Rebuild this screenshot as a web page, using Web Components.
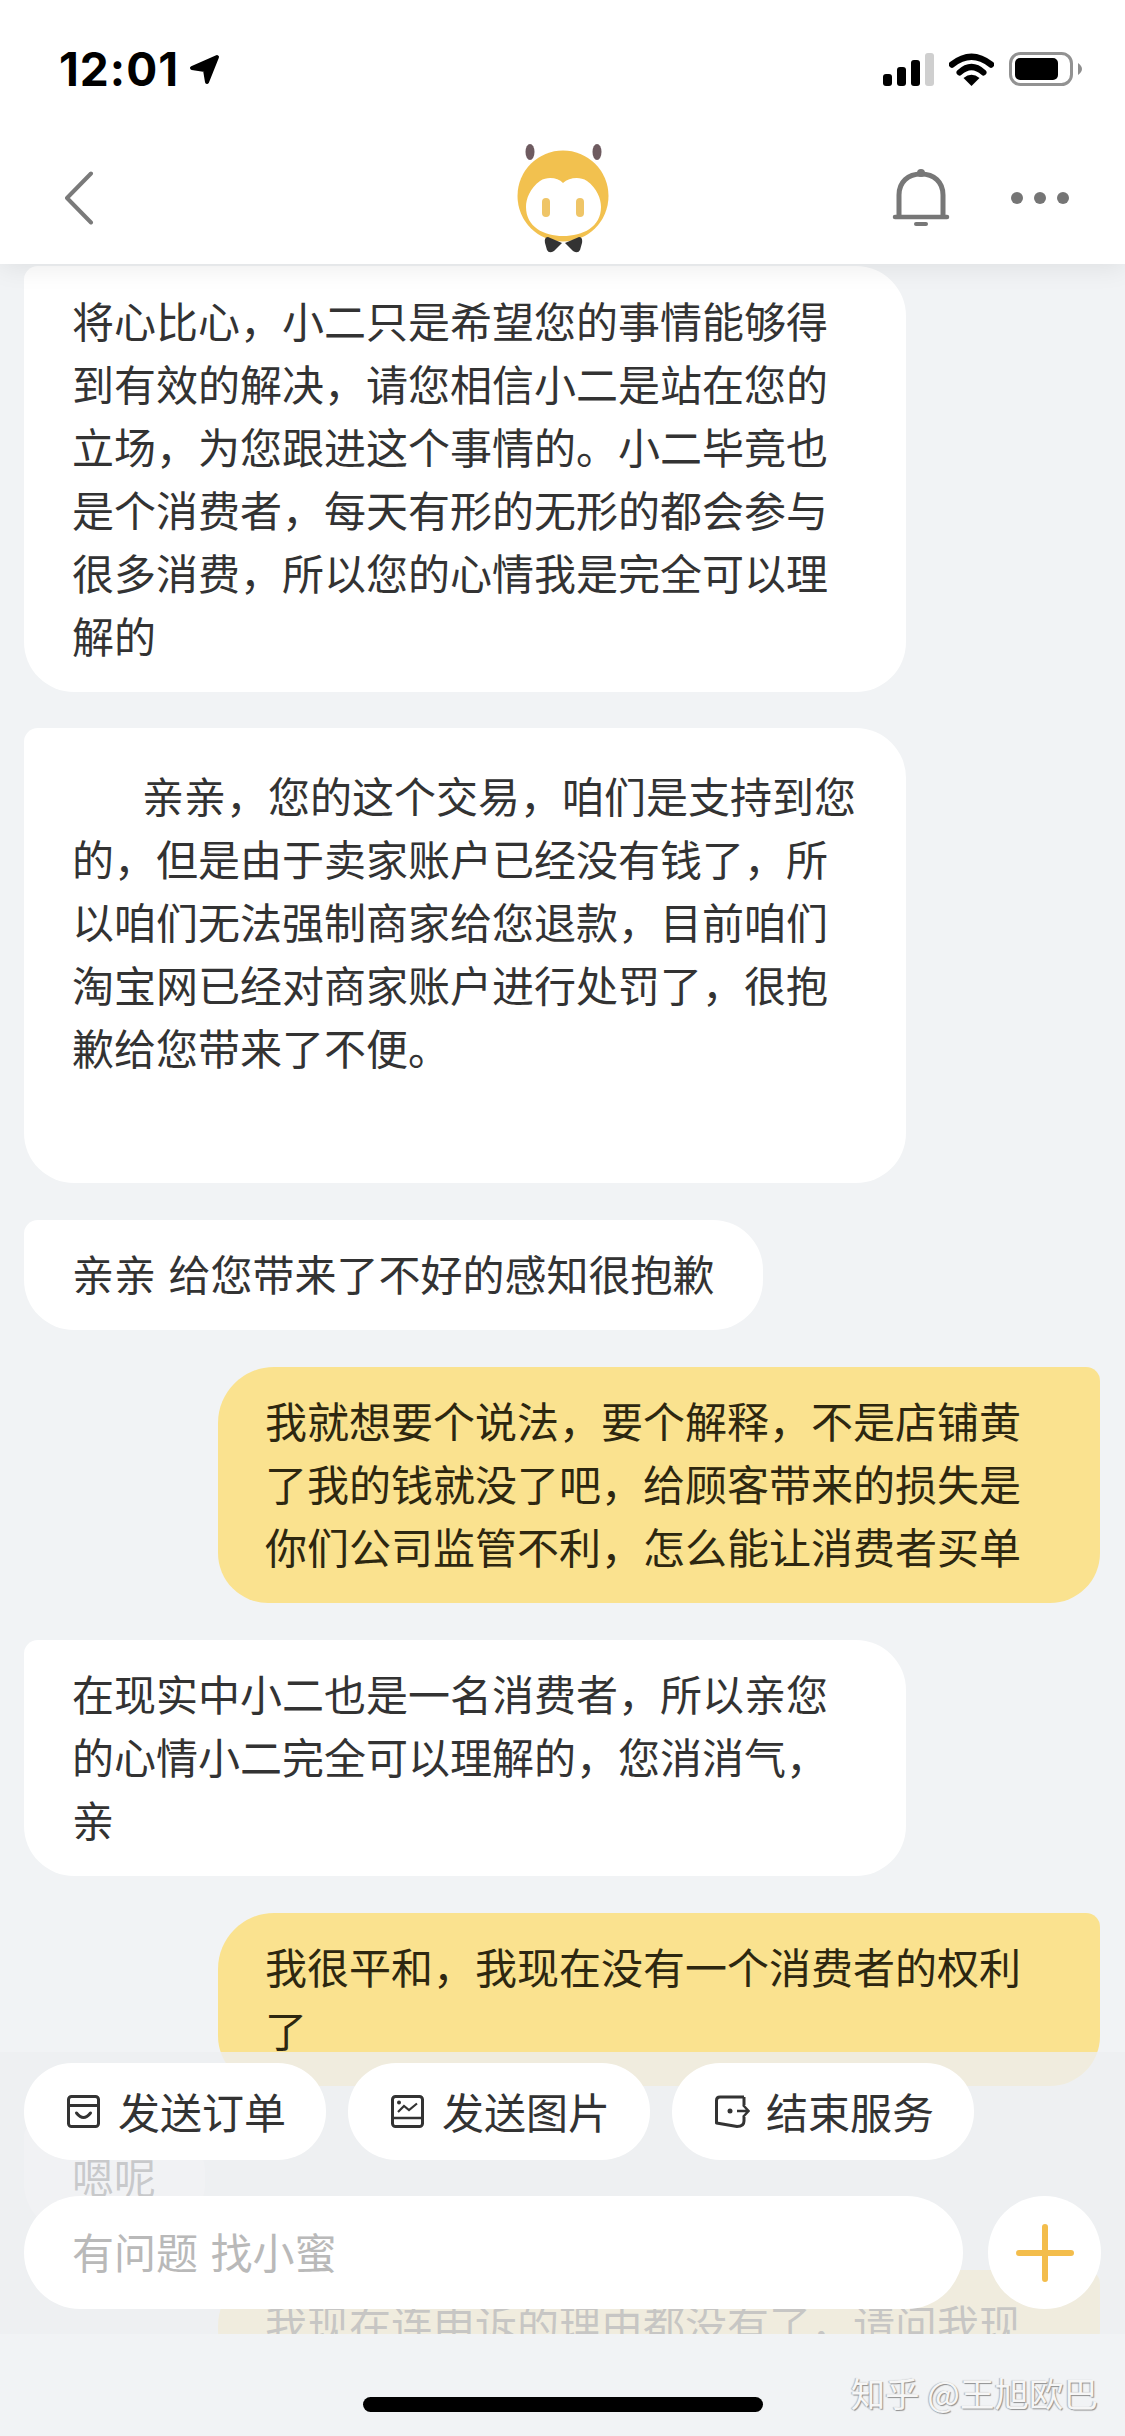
<!DOCTYPE html>
<html lang="zh-CN">
<head>
<meta charset="UTF-8">
<title>小蜜</title>
<style>
    html, body { margin: 0; padding: 0; background: #f1f3f5; }
    body { font-family: "Noto Sans CJK SC", "Noto Sans", sans-serif; }
</style>
</head>
<body>
<app-screen>
    <app-header slot="header"></app-header>

    <chat-bubble>将心比心，小二只是希望您的事情能够得到有效的解决，请您相信小二是站在您的立场，为您跟进这个事情的。小二毕竟也是个消费者，每天有形的无形的都会参与很多消费，所以您的心情我是完全可以理解的</chat-bubble>
    <chat-bubble style="--indent:70px;--pad-top:34.5px;--pad-bottom:105.5px">亲亲，您的这个交易，咱们是支持到您的，但是由于卖家账户已经没有钱了，所以咱们无法强制商家给您退款，目前咱们淘宝网已经对商家账户进行处罚了，很抱歉给您带来了不便。</chat-bubble>
    <chat-bubble>亲亲 给您带来了不好的感知很抱歉</chat-bubble>
    <chat-bubble side="me">我就想要个说法，要个解释，不是店铺黄了我的钱就没了吧，给顾客带来的损失是你们公司监管不利，怎么能让消费者买单</chat-bubble>
    <chat-bubble>在现实中小二也是一名消费者，所以亲您的心情小二完全可以理解的，您消消气，亲</chat-bubble>
    <chat-bubble side="me">我很平和，我现在没有一个消费者的权利了</chat-bubble>
    <chat-bubble>嗯呢</chat-bubble>
    <chat-bubble side="me">我现在连申诉的理由都没有了，请问我现</chat-bubble>

    <chat-composer slot="footer">
        <action-chip slot="chips" icon="order">发送订单</action-chip>
        <action-chip slot="chips" icon="image">发送图片</action-chip>
        <action-chip slot="chips" icon="exit">结束服务</action-chip>
    </chat-composer>
</app-screen>

<script>
    // Whole phone screen: header on top, scrolled chat under it, composer floating over the chat
    class AppScreen extends HTMLElement {
        constructor() {
            super();
            this.attachShadow({ mode: 'open' }).innerHTML = `
                <style>
                    :host {
                        display: flex;
                        flex-direction: column;
                        position: relative;
                        width: 1125px;
                        height: 2436px;
                        overflow: hidden;
                        background: #f1f3f5;
                    }
                    .top { position: relative; z-index: 2; }
                    .chat {
                        flex: 1;
                        min-height: 0;
                        overflow: hidden;
                        display: flex;
                        flex-direction: column;
                        gap: 36.5px;
                        padding: 2px 25px 0 24px;
                    }
                    .bottom { position: absolute; left: 0; right: 0; bottom: 0; z-index: 3; }
                </style>
                <div class="top"><slot name="header"></slot></div>
                <div class="chat"><slot></slot></div>
                <div class="bottom"><slot name="footer"></slot></div>
            `;
        }
    }
    customElements.define('app-screen', AppScreen);

    // Status bar and navigation bar
    class AppHeader extends HTMLElement {
        constructor() {
            super();
            this.attachShadow({ mode: 'open' }).innerHTML = `
                <style>
                    :host {
                        display: block;
                        height: 264px;
                        background: #fff;
                        box-shadow: 0 2px 26px rgba(0, 0, 0, .09);
                    }
                    svg { display: block; flex: none; }
                    .status {
                        height: 126px;
                        padding: 6px 43px 0 59px;
                        display: flex;
                        align-items: center;
                    }
                    .time {
                        font: 700 46px Inter, "Liberation Sans", sans-serif;
                        color: #000;
                        letter-spacing: 1px;
                    }
                    .arrow { margin-left: 10px; }
                    .icons { margin-left: auto; display: flex; align-items: center; gap: 15px; }
                    .nav {
                        height: 132px;
                        padding: 0 60px;
                        display: grid;
                        grid-template-columns: 1fr auto 1fr;
                        align-items: center;
                    }
                    .back { margin-left: 4px; }
                    .right { display: flex; justify-content: flex-end; align-items: center; gap: 61px; margin-right: -4px; }
                </style>
                <div class="status">
                    <span class="time">12:01</span>
                    <svg class="arrow" width="31" height="31" viewBox="0 0 31 31">
                        <path d="M28 3 L3 14 L16 16 L18 28 Z" fill="#000" stroke="#000" stroke-width="4" stroke-linejoin="round"/>
                    </svg>
                    <div class="icons">
                        <svg width="51" height="33" viewBox="0 0 51 33">
                            <rect x="0" y="21" width="9" height="12" rx="3"/>
                            <rect x="14" y="14" width="9" height="19" rx="3"/>
                            <rect x="28" y="7" width="9" height="26" rx="3"/>
                            <rect x="42" y="0" width="9" height="33" rx="3" fill="#cfcfcf"/>
                        </svg>
                        <svg width="45" height="33" viewBox="0 0 45 33">
                            <path d="M3 11.5 Q22.5 -4 42 11.5" fill="none" stroke="#000" stroke-width="6.5" stroke-linecap="round"/>
                            <path d="M10.5 19.5 Q22.5 8.5 34.5 19.5" fill="none" stroke="#000" stroke-width="6" stroke-linecap="round"/>
                            <path d="M14.5 25 Q22.5 18.5 30.5 25 L22.5 33 Z"/>
                        </svg>
                        <svg width="73" height="34" viewBox="0 0 73 34">
                            <rect x="1.5" y="1.5" width="61" height="31" rx="10" fill="none" stroke="#929292" stroke-width="3"/>
                            <rect x="6" y="6" width="43" height="22" rx="5"/>
                            <path d="M69 11 Q73 14 73 17 Q73 20 69 23 Z" fill="#8e8e8e"/>
                        </svg>
                    </div>
                </div>
                <div class="nav">
                    <svg class="back" width="30" height="54" viewBox="0 0 30 54">
                        <path d="M27 2.500 L3 27 L27 51.500" fill="none" stroke="#7a7a7a" stroke-width="4" stroke-linecap="round" stroke-linejoin="round"/>
                    </svg>
                    <svg width="100" height="110" viewBox="0 0 100 110">
                        <ellipse cx="17" cy="9" rx="4.500" ry="8" fill="#6e5b60"/>
                        <ellipse cx="84" cy="9" rx="4.500" ry="8" fill="#6e5b60"/>
                        <circle cx="50" cy="53" r="45.500" fill="#f2c14f"/>
                        <path d="M50 40 C56 35 66 33 74 38 C84 45 88 56 88 64 C88 84 70 93 50 93 C31 93 13 84 13 64 C13 56 17 45 27 38 C35 33 45 35 50 40 Z" fill="#fff"/>
                        <rect x="29" y="55" width="8" height="19" rx="4" fill="#efc567"/>
                        <rect x="63" y="55" width="8" height="19" rx="4" fill="#efc567"/>
                        <path d="M49 100 L35 94 Q31 94 32 100 L34 107 Q36 111 41 108 Z" fill="#333"/>
                        <path d="M52 100 L66 94 Q70 94 69 100 L67 107 Q65 111 60 108 Z" fill="#333"/>
                    </svg>
                    <div class="right">
                        <svg width="58" height="58" viewBox="0 0 58 58">
                            <path d="M7 47 V26 C7 13 16 5 29 5 C42 5 51 13 51 26 V47" fill="none" stroke="#777" stroke-width="5"/>
                            <circle cx="29" cy="4" r="4" fill="#777"/>
                            <path d="M3 48 H55" stroke="#777" stroke-width="4.500" stroke-linecap="round"/>
                            <path d="M24 55 H34" stroke="#777" stroke-width="4" stroke-linecap="round"/>
                        </svg>
                        <svg width="58" height="12" viewBox="0 0 58 12" fill="#757575">
                            <circle cx="6" cy="6" r="6"/><circle cx="29" cy="6" r="6"/><circle cx="52" cy="6" r="6"/>
                        </svg>
                    </div>
                </div>
            `;
        }
    }
    customElements.define('app-header', AppHeader);

    // One message. side="me" is the yellow one on the right
    class ChatBubble extends HTMLElement {
        constructor() {
            super();
            this.attachShadow({ mode: 'open' }).innerHTML = `
                <style>
                    :host {
                        display: block;
                        flex: none;
                        align-self: flex-start;
                        box-sizing: border-box;
                        max-width: 882px;
                        font-size: 42px;
                        line-height: 63px;
                        word-spacing: 3px;
                    }
                    :host([side="me"]) { align-self: flex-end; width: 882px; }
                    .b {
                        padding: var(--pad-top, 21.5px) 49px var(--pad-bottom, 26px) 48px;
                        text-indent: var(--indent, 0);
                        background: #fff;
                        color: #333;
                        border-radius: 14px 50px 50px 50px;
                    }
                    :host([side="me"]) .b {
                        padding-left: 47px;
                        background: #fae28f;
                        color: #2d2710;
                        border-radius: 56px 14px 50px 50px;
                    }
                </style>
                <div class="b"><slot></slot></div>
            `;
        }
    }
    customElements.define('chat-bubble', ChatBubble);

    const CHIP_ICONS = {
        order: `<rect x="1.500" y="1.500" width="30" height="30" rx="3"/>
                <path d="M2 10.500 H31"/>
                <path d="M9.500 18 Q16.500 27 23.500 18" stroke-linecap="round"/>`,
        image: `<rect x="1.500" y="1.500" width="30" height="30" rx="3"/>
                <path d="M2 23 H31" stroke-width="2.500"/>
                <circle cx="8" cy="7.500" r="2" fill="#333" stroke="none"/>
                <path d="M7 17 L13 11 L18 15 L26 8.500" stroke-width="2.200"/>`,
        exit: `<path d="M29 2 H5 Q1.500 2 1.500 5.500 V28 L22 31.500 Q29 31.500 29 26 V22" stroke-linejoin="round"/>
                <path d="M29 2 V10"/>
                <circle cx="15" cy="16" r="2.500" fill="#333" stroke="none"/>
                <path d="M22 16 H32 M28 10 L33.500 16 L28 22" stroke-width="2.500"/>`
    };

    // White pill above the input, icon then label
    class ActionChip extends HTMLElement {
        constructor() {
            super();
            const icon = CHIP_ICONS[this.getAttribute('icon')] || '';
            this.attachShadow({ mode: 'open' }).innerHTML = `
                <style>
                    :host {
                        display: flex;
                        align-items: center;
                        gap: 16px;
                        box-sizing: border-box;
                        width: 302px;
                        height: 97px;
                        padding-left: 43px;
                        background: #fff;
                        border-radius: 48px;
                        font-size: 42px;
                        color: #333;
                        white-space: nowrap;
                    }
                    .label { padding-bottom: 3px; }
                    svg { flex: none; fill: none; stroke: #333; stroke-width: 3; }
                </style>
                <svg width="35" height="33" viewBox="0 0 35 33">${icon}</svg>
                <span class="label"><slot></slot></span>
            `;
        }
    }
    customElements.define('action-chip', ActionChip);

    // Translucent input panel, then the solid strip with the home bar
    class ChatComposer extends HTMLElement {
        constructor() {
            super();
            this.attachShadow({ mode: 'open' }).innerHTML = `
                <style>
                    :host { display: block; position: relative; }
                    .panel {
                        box-sizing: border-box;
                        height: 282px;
                        padding: 11px 24px 25px;
                        background: rgba(237, 239, 241, .8);
                        display: flex;
                        flex-direction: column;
                        gap: 36px;
                    }
                    .chips { display: flex; gap: 22px; }
                    .row { display: flex; gap: 25px; }
                    .input {
                        flex: 1;
                        box-sizing: border-box;
                        height: 113px;
                        padding: 0 0 4px 48px;
                        display: flex;
                        align-items: center;
                        background: #fff;
                        border-radius: 57px;
                        font-size: 42px;
                        word-spacing: 3px;
                        color: #b9b9b9;
                    }
                    .plus {
                        flex: none;
                        width: 113px;
                        height: 113px;
                        border-radius: 50%;
                        background: #fff;
                        display: flex;
                        align-items: center;
                        justify-content: center;
                    }
                    .strip {
                        height: 102px;
                        background: #f1f3f5;
                        display: flex;
                        justify-content: center;
                    }
                    .home { width: 400px; height: 15px; margin-top: 63px; border-radius: 8px; background: #000; }
                    .mark {
                        position: absolute;
                        right: 27px;
                        bottom: 24px;
                        font-size: 34.5px;
                        line-height: 40px;
                        color: #f6f6f6;
                        text-shadow: 1px 1px 1px #8f8f8f, -1px 0 1px #b5b5b5;
                        white-space: nowrap;
                    }
                </style>
                <div class="panel">
                    <div class="chips"><slot name="chips"></slot></div>
                    <div class="row">
                        <div class="input">有问题 找小蜜</div>
                        <div class="plus">
                            <svg width="58" height="58" viewBox="0 0 58 58">
                                <path d="M29 3 V55 M3 29 H55" stroke="#f3bd4c" stroke-width="6" stroke-linecap="round"/>
                            </svg>
                        </div>
                    </div>
                </div>
                <div class="strip"><div class="home"></div></div>
                <div class="mark">知乎 @王旭欧巴</div>
            `;
        }
    }
    customElements.define('chat-composer', ChatComposer);
</script>
</body>
</html>
